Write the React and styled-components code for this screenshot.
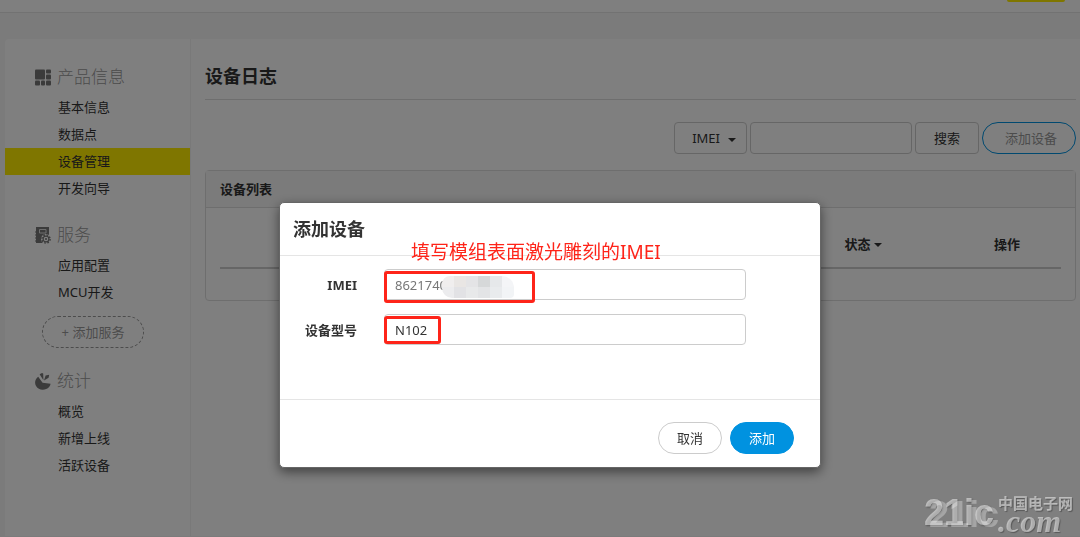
import React from "react";
import styled, { createGlobalStyle } from "styled-components";

const sections = [
  {
    title: "产品信息",
    icon: "grid",
    items: ["基本信息", "数据点", "设备管理", "开发向导"],
  },
  { title: "服务", icon: "book", items: ["应用配置", "MCU开发"], add: true },
  { title: "统计", icon: "pie", items: ["概览", "新增上线", "活跃设备"] },
];

const mosaic = [
  "#f0eeee", "#e9e6e4", "#e4e4e6", "#d6d8d9", "#e6e8ea", "#f4f5f7",
  "#ececee", "#e2e2e5", "#e8e9ea", "#e3e4e6", "#e9ebed", "#f2f4f6",
];

const SectionIcon = ({ name }) => {
  if (name === "grid") {
    return (
      <Icon viewBox="0 0 16 16">
        <rect width="10" height="10" rx="1" />
        <rect x="11" width="5" height="4" rx="1" />
        <rect x="11" y="5" width="5" height="5" rx="1" />
        <rect y="11" width="5" height="5" rx="1" />
        <rect x="6" y="11" width="4" height="5" rx="1" />
        <rect x="11" y="11" width="5" height="5" rx="1" />
      </Icon>
    );
  }
  if (name === "book") {
    return (
      <Icon viewBox="0 0 16 17">
        <path d="M1 0h13v16H1v-1.500H0v-1h1v-2H0v-1h1v-2H0v-1h1v-2H0v-1h1z" />
        <path d="M4.500 2.500h6.500v3.500h-6.500z" fill="none" stroke="#ddd" />
        <circle cx="11" cy="12" r="5" fill="#fff" />
        <circle cx="11" cy="12" r="2.900" fill="none" stroke="#777" strokeWidth="1.200" />
        <circle
          cx="11"
          cy="12"
          r="4.100"
          fill="none"
          stroke="#777"
          strokeWidth="1.400"
          strokeDasharray="1.700 1.520"
        />
        <circle cx="11" cy="12" r="1.100" />
      </Icon>
    );
  }
  return (
    <Icon viewBox="0 0 16 17">
      <path d="M3.200 3.800 7.600 9.800l8 .9A7.800 7.200 0 1 1 3.200 3.800z" />
      <path d="M4.600 1.200 7 0l1.200.4.200 6.800z" />
      <path d="M9 7.600 10.600 2.600l3.600-.8-.6 3z" />
    </Icon>
  );
};

const App = () => {
  return (
    <>
      <GlobalStyle />
      <Page>
        <TopBar>
          <TopTab />
        </TopBar>
        <Panel>
          <Sidebar>
            {sections.map((section) => (
              <Section key={section.title}>
                <SectionTitle>
                  <SectionIcon name={section.icon} />
                  {section.title}
                </SectionTitle>
                {section.items.map((item) => (
                  <NavLink href="#" key={item} $active={item === "设备管理"}>
                    {item}
                  </NavLink>
                ))}
                {section.add && <AddService>+ 添加服务</AddService>}
              </Section>
            ))}
          </Sidebar>
          <Content>
            <PageTitle>设备日志</PageTitle>
            <Toolbar>
              <TypeButton>
                IMEI
                <Caret />
              </TypeButton>
              <SearchInput aria-label="IMEI" />
              <Button>搜索</Button>
              <AddDevice>添加设备</AddDevice>
            </Toolbar>
            <Card>
              <CardHeader>设备列表</CardHeader>
              <CardBody>
                <Table>
                  <thead>
                    <tr>
                      <td />
                      <HeadCell $width="180px">
                        状态
                        <Caret $tight />
                      </HeadCell>
                      <HeadCell $width="108px">操作</HeadCell>
                    </tr>
                  </thead>
                </Table>
              </CardBody>
            </Card>
          </Content>
        </Panel>
      </Page>
      <Backdrop>
        <Modal role="dialog" aria-labelledby="modal-title">
          <ModalHeader>
            <ModalTitle id="modal-title">添加设备</ModalTitle>
            <Note>填写模组表面激光雕刻的IMEI</Note>
          </ModalHeader>
          <ModalBody>
            <Field>
              <Label htmlFor="imei">IMEI</Label>
              <Control>
                <TextInput id="imei" defaultValue="8621740" $muted />
                <Mosaic>
                  {mosaic.map((color, i) => (
                    <Tile key={i} $color={color} />
                  ))}
                </Mosaic>
                <Mark $width="151px" $height="32px" />
              </Control>
            </Field>
            <Field>
              <Label htmlFor="model">设备型号</Label>
              <Control>
                <TextInput id="model" defaultValue="N102" />
                <Mark $width="57px" $height="28px" />
              </Control>
            </Field>
          </ModalBody>
          <ModalFooter>
            <PillButton>取消</PillButton>
            <PillButton $primary>添加</PillButton>
          </ModalFooter>
        </Modal>
      </Backdrop>
      <Watermark>
        <Brand>21ic</Brand>
        <BrandSide>
          <BrandName>中国电子网</BrandName>
          <BrandDomain>.com</BrandDomain>
        </BrandSide>
      </Watermark>
    </>
  );
};
export default App;

const GlobalStyle = createGlobalStyle`
  * {
    box-sizing: border-box;
  }
  body {
    margin: 0;
    overflow: hidden;
    background: #f6f6f6;
    color: #333;
    font-family: "Noto Sans", "Noto Sans CJK SC", sans-serif;
    font-size: 13px;
    line-height: 20px;
  }
  button, input {
    font: inherit;
    color: inherit;
  }
`;

const Page = styled.div`
  display: flex;
  flex-direction: column;
  min-height: 100vh;
`;

const TopBar = styled.header`
  background: #fff;
  border-bottom: 1px solid #e4e4e4;
  display: flex;
  height: 13px;
  justify-content: flex-end;
  padding-right: 15px;
`;

const TopTab = styled.div`
  background: #ffec00;
  border-radius: 0 0 8px 8px;
  height: 2px;
  width: 58px;
`;

const Panel = styled.div`
  background: #fff;
  border-radius: 4px 0 0 0;
  display: flex;
  flex: 1;
  margin: 26px 0 1px 5px;
`;

const Sidebar = styled.nav`
  border-right: 1px solid #f2f2f2;
  padding-top: 21px;
  width: 186px;
`;

const Section = styled.section`
  margin-bottom: 16px;
`;

const SectionTitle = styled.h2`
  align-items: center;
  color: #999;
  display: flex;
  font-size: 17px;
  font-weight: 300;
  gap: 6px;
  height: 34px;
  margin: 0;
  padding-left: 30px;
`;

const Icon = styled.svg`
  fill: #777;
  height: 17px;
  width: 16px;
`;

const NavLink = styled.a`
  background: ${(props) => (props.$active ? "#ffec00" : "none")};
  color: #333;
  display: block;
  line-height: 27px;
  padding-left: 53px;
  text-decoration: none;
`;

const AddService = styled.button`
  background: none;
  border: 1px dashed #999;
  border-radius: 16px;
  color: #999;
  display: block;
  height: 32px;
  margin: 10px 0 0 37px;
  width: 102px;
`;

const Content = styled.main`
  flex: 1;
  padding: 15px 4px 0 14px;
`;

const PageTitle = styled.h1`
  border-bottom: 1px solid #ddd;
  font-size: 18px;
  font-weight: bold;
  line-height: 44px;
  margin: 0 0 22px;
  padding-bottom: 1px;
`;

const Toolbar = styled.div`
  display: flex;
  gap: 3px;
  justify-content: flex-end;
`;

const Button = styled.button`
  background: #fff;
  border: 1px solid #ccc;
  border-radius: 4px;
  height: 32px;
  padding: 0 18px;
`;

const TypeButton = styled(Button)`
  padding: 0 10px 0 17px;
`;

const Caret = styled.span`
  border: 4px solid transparent;
  border-bottom: 0;
  border-top-color: #333;
  display: inline-block;
  margin-left: ${(props) => (props.$tight ? "3px" : "8px")};
  vertical-align: middle;
`;

const SearchInput = styled.input`
  border: 1px solid #ccc;
  border-radius: 4px;
  height: 32px;
  padding: 0 10px;
  width: 162px;
`;

const AddDevice = styled.button`
  background: #fff;
  border: 1px solid #0092e0;
  border-radius: 16px;
  color: #999;
  height: 32px;
  padding: 0 18px 0 22px;
`;

const Card = styled.section`
  border: 1px solid #ddd;
  border-radius: 4px;
  margin-top: 16px;
`;

const CardHeader = styled.h3`
  background: #f6f6f6;
  border-bottom: 1px solid #ddd;
  font-size: 13px;
  font-weight: bold;
  line-height: 36px;
  margin: 0;
  padding-left: 14px;
`;

const CardBody = styled.div`
  padding: 12px 14px 31px;
`;

const Table = styled.table`
  border-bottom: 2px solid #ccc;
  border-collapse: collapse;
  width: 100%;
`;

const HeadCell = styled.th`
  height: 48px;
  padding: 0;
  width: ${(props) => props.$width};
`;

const Backdrop = styled.div`
  align-items: flex-start;
  background: rgba(0, 0, 0, 0.5);
  display: flex;
  inset: 0;
  justify-content: center;
  padding: 202px 0 0 20px;
  position: fixed;
`;

const Modal = styled.div`
  background: #fff;
  border: 1px solid #666;
  border-radius: 5px;
  box-shadow: 0 4px 12px rgba(0, 0, 0, 0.5);
  width: 542px;
`;

const ModalHeader = styled.header`
  border-bottom: 1px solid #e5e5e5;
  padding: 13px 13px 12px;
  position: relative;
`;

const ModalTitle = styled.h2`
  font-size: 18px;
  font-weight: bold;
  line-height: 27px;
  margin: 0;
`;

/* sits over the header's lower border */
const Note = styled.span`
  color: #fe2419;
  font-size: 19px;
  left: 131px;
  line-height: 24px;
  position: absolute;
  top: 37px;
  white-space: nowrap;
  z-index: 1;
`;

const ModalBody = styled.div`
  display: flex;
  flex-direction: column;
  gap: 14px;
  padding: 13px 74px 54px 13px;
`;

const Field = styled.div`
  align-items: center;
  display: flex;
  gap: 27px;
`;

const Label = styled.label`
  font-weight: bold;
  text-align: right;
  width: 64px;
`;

const Control = styled.div`
  flex: 1;
  position: relative;
`;

const TextInput = styled.input`
  border: 1px solid #ccc;
  border-radius: 4px;
  color: ${(props) => (props.$muted ? "#777" : "#333")};
  display: block;
  height: 31px;
  padding: 0 10px;
  width: 100%;
`;

const Mosaic = styled.div`
  border-radius: 8px 12px 4px 10px;
  display: grid;
  grid-template-columns: repeat(6, 12px);
  grid-template-rows: repeat(2, 11px);
  left: 58px;
  overflow: hidden;
  position: absolute;
  top: 7px;
`;

const Tile = styled.span`
  background: ${(props) => props.$color};
`;

const Mark = styled.span`
  border: 3px solid #fe2419;
  border-radius: 3px;
  height: ${(props) => props.$height};
  left: 0;
  pointer-events: none;
  position: absolute;
  top: 2px;
  width: ${(props) => props.$width};
`;

const ModalFooter = styled.footer`
  border-top: 1px solid #e5e5e5;
  display: flex;
  gap: 8px;
  justify-content: flex-end;
  padding: 22px 26px 13px;
`;

const PillButton = styled.button`
  background: ${(props) => (props.$primary ? "#0092e0" : "#fff")};
  border: 1px solid ${(props) => (props.$primary ? "#0092e0" : "#ccc")};
  border-radius: 16px;
  color: ${(props) => (props.$primary ? "#fff" : "#333")};
  height: 32px;
  width: 64px;
`;

const Watermark = styled.div`
  align-items: flex-end;
  bottom: 8px;
  color: rgba(255, 255, 255, 0.5);
  display: flex;
  font-weight: bold;
  gap: 4px;
  position: fixed;
  right: 7px;
`;

const Brand = styled.span`
  font-family: "Liberation Sans", sans-serif;
  font-size: 36px;
  line-height: 32px;
  text-shadow: 5px 2px 0 rgba(255, 255, 255, 0.3),
    1px 1px 2px rgba(0, 0, 0, 0.3);
`;

const BrandSide = styled.span`
  display: flex;
  flex-direction: column;
  text-shadow: 1px 1px 1px rgba(0, 0, 0, 0.3);
`;

const BrandName = styled.span`
  font-size: 15px;
  line-height: 20px;
`;

const BrandDomain = styled.span`
  font-family: "Liberation Serif", serif;
  font-size: 32px;
  font-style: italic;
  line-height: 16px;
`;
